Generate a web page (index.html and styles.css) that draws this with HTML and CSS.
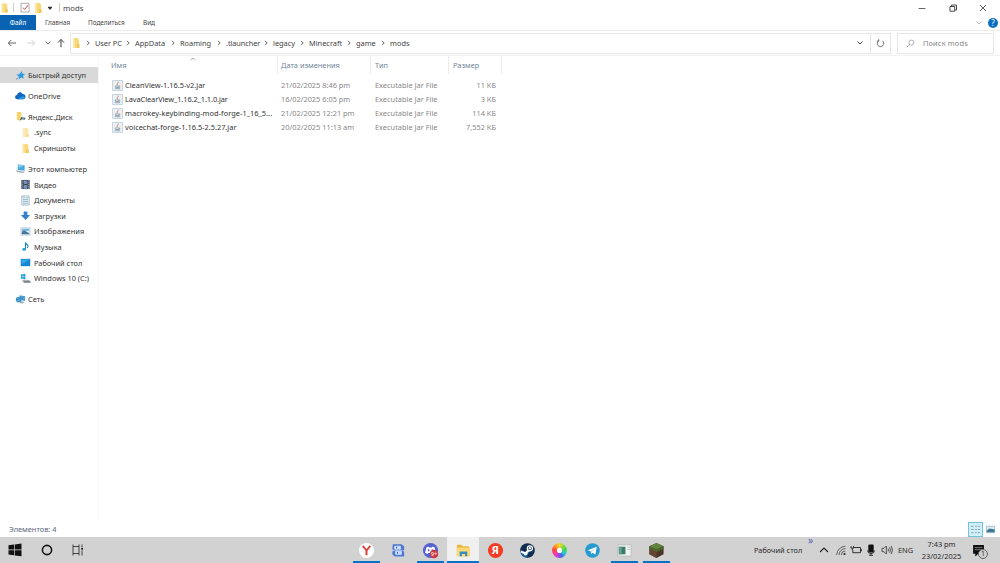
FILE: index.html
```html
<!DOCTYPE html>
<html lang="ru">
<head>
    <meta charset="UTF-8">
    <meta name="viewport" content="width=device-width, initial-scale=1.0">
    <title>mods</title>
    <link rel="stylesheet" href="styles.css">
</head>
<body>
    <svg class="sprite">
        <symbol id="folder" viewBox="0 0 12 12"><path d="M3 1h4.5l1.5 1.5V11H3z" fill="#f8d775"/><path d="M3 1h2v10H3z" fill="#fbe6a2"/><path d="M7 7h2.5v4H7z" fill="#efc658"/></symbol>
        <symbol id="chev" viewBox="0 0 6 8"><path d="M2 1.8L4.2 4 2 6.2" fill="none" stroke="#555" stroke-width=".9"/></symbol>
        <symbol id="down" viewBox="0 0 8 6"><path d="M1.5 1.5L4 4l2.5-2.5" fill="none" stroke="currentColor"/></symbol>
        <symbol id="jar" viewBox="0 0 12 12"><rect x=".7" y=".7" width="10.6" height="10.6" fill="#eef1f4" stroke="#b5c6d4" stroke-width=".8"/><path d="M6.5 1.8c1.5 1.3-2.4 2-.6 3.8" fill="none" stroke="#c97c66" stroke-width="1"/><path d="M3.5 6.5h4.3v1.7H4zM3 9.5h6M8 6.6q1.6.2 0 1.6" fill="none" stroke="#8496a8" stroke-width=".9"/></symbol>
    </svg>

    <div class="window">
        <div class="titlebar">
            <svg class="ico12 first"><use href="#folder"/></svg>
            <span class="divider d1"></span>
            <svg class="check" viewBox="0 0 10 10"><path d="M1 .8h8v8.7H1z" fill="#fff" stroke="#999" stroke-width=".8"/><path d="M3 5.2l1.7 1.7L8 2.7" fill="none" stroke="#b35242"/></svg>
            <svg class="ico12 second"><use href="#folder"/></svg>
            <svg class="caret" viewBox="0 0 6 6"><path d="M1 1.7h4v.8L3 5 1 2.5z" fill="#333"/></svg>
            <span class="divider d2"></span>
            <span class="title">mods</span>
            <div class="controls">
                <svg viewBox="0 0 10 10"><path d="M1.5 5.5h7" stroke="#555" stroke-width=".9"/></svg>
                <svg viewBox="0 0 10 10"><path d="M2 3.5h4.7v4.7H2zM3.5 3.3V2h5v5H7" fill="none" stroke="#333" stroke-width=".9"/></svg>
                <svg viewBox="0 0 10 10"><path d="M2 2l6 6M8 2L2 8" stroke="#333" stroke-width=".8"/></svg>
            </div>
        </div>

        <div class="tabs">
            <span class="tab active">Файл</span>
            <span class="tab t-home">Главная</span>
            <span class="tab t-share">Поделиться</span>
            <span class="tab t-view">Вид</span>
            <svg class="ribbon-toggle" viewBox="0 0 8 6"><use href="#down"/></svg>
            <span class="help">?</span>
        </div>

        <div class="addressbar">
            <div class="nav">
                <svg viewBox="0 0 10 10"><path d="M9 5H1.5M4.3 2L1.3 5l3 3" fill="none" stroke="#555" stroke-width=".9"/></svg>
                <svg viewBox="0 0 10 10"><path d="M1 5h7.5M5.7 2l3 3-3 3" fill="none" stroke="#ccc" stroke-width=".9"/></svg>
                <svg class="small" viewBox="0 0 8 6"><use href="#down"/></svg>
                <svg viewBox="0 0 10 10"><path d="M5 9.3V1.5M2 4.6l3-3.2 3 3.2" fill="none" stroke="#444"/></svg>
            </div>
            <div class="path">
                <svg class="ico12"><use href="#folder"/></svg>
                <svg class="sep"><use href="#chev"/></svg><span class="p-user">User PC</span>
                <svg class="sep"><use href="#chev"/></svg><span class="p-app">AppData</span>
                <svg class="sep"><use href="#chev"/></svg><span class="p-roam">Roaming</span>
                <svg class="sep"><use href="#chev"/></svg><span class="p-tl">.tlauncher</span>
                <svg class="sep"><use href="#chev"/></svg><span class="p-leg">legacy</span>
                <svg class="sep"><use href="#chev"/></svg><span class="p-mc">Minecraft</span>
                <svg class="sep"><use href="#chev"/></svg><span class="p-game">game</span>
                <svg class="sep"><use href="#chev"/></svg><span class="p-mods">mods</span>
                <svg class="history" viewBox="0 0 8 6"><use href="#down"/></svg>
                <div class="refresh"><svg viewBox="0 0 10 10"><path d="M7.2 2A3.6 3.6 0 1 1 3 1.9M3 .2V2.3H1" fill="none" stroke="#555" stroke-width=".9"/></svg></div>
            </div>
            <div class="search">
                <svg viewBox="0 0 10 10"><circle cx="6" cy="4" r="2.8" fill="none" stroke="#888" stroke-width=".7"/><path d="M4 6L1 9" stroke="#888" stroke-width=".8"/></svg>
                <span>Поиск mods</span>
            </div>
        </div>

        <div class="main">
            <div class="sidebar">
                <div class="item selected"><svg viewBox="0 0 12 12"><path d="M7.2 1l1 3 3 .4-2.4 2 .7 3.2-2.8-1.5L4 10.3l.5-3L1.5 5l3.3-.5z" fill="#2f9be0"/><path d="M1 10.5l3-2.6" stroke="#5b91b5"/></svg><span>Быстрый доступ</span></div>
                <div class="item group"><svg viewBox="0 0 12 12"><path d="M2.5 10a2.3 2.3 0 0 1-.3-4.6C3 1.8 7 1.4 8.2 4.4c2.3-.2 3.4 1.5 3.2 3.2-.2 1.6-1.3 2.4-2.4 2.4z" fill="#0f68bd"/><path d="M3 10l5.4-3.5 3 1.7c-.4 1.2-1.2 1.8-2.4 1.8z" fill="#2996df"/></svg><span>OneDrive</span></div>
                <div class="item group"><svg viewBox="0 0 12 12"><path d="M2 1h4l1 1.3V10H2z" fill="#f7d26c"/><path d="M5 10.5l2-4 4.5 1-1 2-3-.4z" fill="#35566c"/><path d="M8 6.2l3 1-1 1.4-2.6-.4z" fill="#8dacb8"/></svg><span>Яндекс.Диск</span></div>
                <div class="item sub faded"><svg><use href="#folder"/></svg><span>.sync</span></div>
                <div class="item sub"><svg><use href="#folder"/></svg><span class="w-shots">Скриншоты</span></div>
                <div class="item group"><svg viewBox="0 0 12 12"><path d="M3 1.5l7.5 1v6L3 7.5z" fill="#48a7df"/><path d="M3 1.5l7.5 1-6 3z" fill="#82cbed"/><path d="M1 8l7 1.2 3 .3-2 1.5-6.8-1.3z" fill="#9daab2"/></svg><span class="w-pc">Этот компьютер</span></div>
                <div class="item sub"><svg viewBox="0 0 12 12"><path d="M1.5 1h9v10h-9z" fill="#3c4654"/><path d="M4 1.5h4v4H4zM4 6.5h4v4H4z" fill="#7591ba"/><path d="M2.7 1.5v9M9.3 1.5v9" stroke="#c1c7cd" stroke-dasharray="1 1" stroke-width=".8"/></svg><span>Видео</span></div>
                <div class="item sub"><svg viewBox="0 0 12 12"><path d="M2 1h8v10H2z" fill="#eef4f7" stroke="#8da7b6" stroke-width=".8"/><path d="M3.2 3h2.2M3.2 5h5.6M3.2 7h5.6M3.2 9h5.6M6.5 3h2.3" stroke="#74a6bd" stroke-width=".8"/></svg><span>Документы</span></div>
                <div class="item sub"><svg viewBox="0 0 12 12"><path d="M4 1.5h4v4h3L6 11 1 5.5h3z" fill="#3284cf"/></svg><span>Загрузки</span></div>
                <div class="item sub"><svg viewBox="0 0 12 12"><path d="M1 2h10v8H1z" fill="#e8f2f7" stroke="#a4b2bb" stroke-width=".6"/><path d="M2 3h8v2.3H2z" fill="#6db7e0"/><path d="M2 6l3-1 5 3v1H2z" fill="#477796"/></svg><span class="w-pics">Изображения</span></div>
                <div class="item sub"><svg viewBox="0 0 12 12"><path d="M6 9V1.5q.3 2 2.5 3 .8 1.3-.6 3" fill="none" stroke="#1884c7" stroke-width="1.2"/><ellipse cx="4.5" cy="9.2" rx="2" ry="1.5" fill="#24a2d9"/></svg><span>Музыка</span></div>
                <div class="item sub"><svg viewBox="0 0 12 12"><path d="M.8 2h10.4v8H.8z" fill="#1686d3"/><path d="M1.5 2.6h9L2 8z" fill="#35a7e9"/></svg><span>Рабочий стол</span></div>
                <div class="item sub"><svg viewBox="0 0 12 12"><path d="M1 1.5l2-.3v2.5H1zM3.5 1.2l2.3-.4v2.9H3.5zM1 4.2h2v2.3l-2-.3zM3.5 4.2h2.3V7l-2.3-.4z" fill="#1c9ed5"/><path d="M2 8l8-.4 1.5 1.7v1.5H4.5z" fill="#a0a9af"/><path d="M4 9.5l7 .2" stroke="#596873" stroke-width=".8"/></svg><span>Windows 10 (C:)</span></div>
                <div class="item group"><svg viewBox="0 0 12 12"><path d="M5 1.3l6 1.2v5.2L5 6.5z" fill="#499dd2"/><circle cx="4" cy="6" r="3.1" fill="#3687c0"/><path d="M2 4.8q2 .2 3-1.5M1.5 7.5q3 0 4.7-2" stroke="#85d1e8" fill="none" stroke-width=".8"/><path d="M6 8l4.5.8L8 10.3 5 9.7z" fill="#8faabc"/></svg><span>Сеть</span></div>
            </div>

            <div class="files">
                <svg class="sort" viewBox="0 0 8 6"><path d="M1.5 4L4 2l2.5 2" fill="none" stroke="#888" stroke-width=".7"/></svg>
                <div class="row head">
                    <span class="name">Имя</span><span class="date">Дата изменения</span><span class="type">Тип</span><span class="size">Размер</span>
                </div>
                <div class="row">
                    <span class="name"><svg><use href="#jar"/></svg><b>CleanView-1.16.5-v2.jar</b></span><span class="date">21/02/2025 8:46 pm</span><span class="type">Executable Jar File</span><span class="size">11 КБ</span>
                </div>
                <div class="row">
                    <span class="name"><svg><use href="#jar"/></svg><b class="tight">LavaClearView_1.16.2_1.1.0.jar</b></span><span class="date">16/02/2025 6:05 pm</span><span class="type">Executable Jar File</span><span class="size">3 КБ</span>
                </div>
                <div class="row">
                    <span class="name"><svg><use href="#jar"/></svg><b class="loose">macrokey-keybinding-mod-forge-1_16_5...</b></span><span class="date">21/02/2025 12:21 pm</span><span class="type">Executable Jar File</span><span class="size">114 КБ</span>
                </div>
                <div class="row">
                    <span class="name"><svg><use href="#jar"/></svg><b>voicechat-forge-1.16.5-2.5.27.jar</b></span><span class="date">20/02/2025 11:13 am</span><span class="type">Executable Jar File</span><span class="size">7,552 КБ</span>
                </div>
            </div>
        </div>

        <div class="status">
            <span>Элементов: 4</span>
            <div class="views">
                <div class="view on"><svg viewBox="0 0 12 12"><path d="M1 2.5h3M1 6h3M1 9.5h3M5.5 2.5h2M8.5 2.5H11M5.5 6h2M8.5 6H11M5.5 9.5h2M8.5 9.5H11" stroke="#6e99a8" stroke-width=".9"/></svg></div>
                <div class="view"><svg viewBox="0 0 12 12"><path d="M1.5 2.5h9v7h-9z" fill="#dceaf3" stroke="#8ea5b5" stroke-width=".7"/><path d="M2 7l3-2 5.5 1v3H2z" fill="#397796"/></svg></div>
            </div>
        </div>
    </div>

    <div class="taskbar">
        <div class="start">
            <svg viewBox="0 0 14 14"><path d="M.5 2.3L6 1.5v5H.5zM6.7 1.4L13.5.5v6H6.7zM.5 7.3H6v5l-5.5-.7zM6.7 7.3h6.8v6l-6.8-.9z" fill="#111"/></svg>
            <svg viewBox="0 0 14 14"><circle cx="7" cy="7" r="4.6" fill="none" stroke="#151515" stroke-width="1.6"/></svg>
            <svg viewBox="0 0 14 14"><path d="M2 1.5v2h6v-2M2 12.5v-2h6v2M2 3.5v7M8 3.5v7M11 1.5v3M11 7.5v5" fill="none" stroke="#333" stroke-width=".9"/><path d="M10.2 5h1.8v1.8h-1.8z" fill="#222"/></svg>
        </div>
        <div class="apps">
            <div class="app open"><svg viewBox="0 0 18 18"><circle cx="9" cy="9" r="8" fill="#fff"/><path d="M5 4l4 5 4-5M9 8.5V14" fill="none" stroke="#d8453c" stroke-width="2.1"/></svg></div>
            <div class="app"><svg viewBox="0 0 18 18"><path d="M3 2.5h9l3 2v4l-1.5.8 1.5 1v5H5l-2.5-2v-3L4 9 2.5 7.5z" fill="#4d78d4"/><path d="M5 4.5h6v3H5zM6 10h6v3H6zM4 8.7h9" fill="#c9dcff" stroke="#e5edff" stroke-width=".8"/><path d="M7 5v2M8 10.5v2" stroke="#315bbb"/></svg></div>
            <div class="app open"><svg viewBox="0 0 18 18"><circle cx="9" cy="9" r="8" fill="#5560d2"/><path d="M4.6 5.8l2.2-1 .6 1h3.2l.6-1 2.2 1 1.3 5.5-2.4 1.5-.9-1.2H6.6l-.9 1.2-2.4-1.5z" fill="#fff"/><ellipse cx="7" cy="8.8" rx="1" ry="1.2" fill="#5560d2"/><ellipse cx="11" cy="8.8" rx="1" ry="1.2" fill="#5560d2"/><circle cx="12.7" cy="12.7" r="4.5" fill="#ce3945"/></svg><span class="badge">9+</span></div>
            <div class="app open current"><svg viewBox="0 0 18 18"><path d="M2 3h5l1.2 1.5H15V15H2z" fill="#e7b842"/><path d="M2 6h14v9H2z" fill="#fbda76"/><path d="M5 10h8v5.2h-2.3v-2.4H7.3v2.4H5z" fill="#388dc2"/></svg></div>
            <div class="app"><svg viewBox="0 0 18 18"><circle cx="9" cy="9" r="8" fill="#f43c24"/></svg><span class="ya">Я</span></div>
            <div class="app"><svg viewBox="0 0 18 18"><circle cx="9" cy="9" r="7.7" fill="#102c50"/><path d="M1.4 9.7L7 12M1.7 11.4a7.7 7.7 0 0 0 6 5.2L12 9" fill="#1765a0"/><path d="M2 10l5 2.1 4-4.5" fill="none" stroke="#fff" stroke-width="2.3"/><circle cx="11.5" cy="6.7" r="2.7" fill="#102c50" stroke="#fff" stroke-width="1.3"/><circle cx="11.5" cy="6.7" r="1.3" fill="#fff"/><circle cx="7" cy="12.3" r="2" fill="#fff"/></svg></div>
            <div class="app"><span class="wheel"></span></div>
            <div class="app"><svg viewBox="0 0 18 18"><circle cx="9" cy="9" r="7.7" fill="#269bd0"/><path d="M4 8.8L13.5 5 12 13.5l-3-2.2-1.5 1.5-.4-3z" fill="#fff"/><path d="M7.3 9.7L12 6.5l-3.7 4.2-.7 1.6z" fill="#b9dceb"/></svg></div>
            <div class="app open"><svg viewBox="0 0 18 18"><path d="M2 3h14v12H2z" fill="#f3f3f0" stroke="#aeb8b5" stroke-width=".8"/><path d="M3 5h7v8H3z" fill="#397c6f"/><path d="M3 5h3v8H3z" fill="#659e8c"/><path d="M12 5.5h3M12 8h3" stroke="#bbc0bf"/></svg></div>
            <div class="app open"><svg viewBox="0 0 18 18"><path d="M9 1l7.5 3.5V13L9 17l-7.5-4V4.5z" fill="#4c3528"/><path d="M1.5 4.5L9 8v9l-7.5-4z" fill="#644532"/><path d="M9 1l7.5 3.5L9 8 1.5 4.5z" fill="#62833e"/><path d="M1.5 4.5L9 8v2.5L7.5 9v1L5 8v1.3L1.5 7zM9 8l7.5-3.5V7L14 9V7.8L11.5 10V9L9 10.5z" fill="#466a2d"/></svg></div>
        </div>
        <div class="tray">
            <span class="desk">Рабочий стол</span>
            <span class="more">»</span>
            <svg class="i-up" viewBox="0 0 10 10"><path d="M1 7l4-4 4 4" fill="none" stroke="#222" stroke-width="1.1"/></svg>
            <svg class="i-net" viewBox="0 0 12 12"><path d="M1.7 11A9 9 0 0 1 10.3 2.2M4 11a6.5 6.5 0 0 1 6.4-6.4M6.3 11a4 4 0 0 1 4-4" fill="none" stroke="#555" stroke-width=".9"/><circle cx="9.5" cy="10" r="1.1" fill="#222"/></svg>
            <svg class="i-bat" viewBox="0 0 12 12"><path d="M3 3.5h7.5v5.2H2.8V6M11.3 5v2.3M1 2v2.2h2.5V2M2.3 4.3V6" fill="none" stroke="#222" stroke-width=".9"/></svg>
            <svg class="i-mic" viewBox="0 0 12 12"><rect x="3.3" y=".6" width="5.4" height="8" rx="1.2" fill="#111"/><path d="M2.5 6.5q0 3 3.5 3t3.5-3M6 9v2.5M4 11.3h4" fill="none" stroke="#222" stroke-width=".9"/></svg>
            <svg class="i-vol" viewBox="0 0 12 12"><path d="M1 4.3h2L5.3 2v8L3 7.7H1zM7 4.5q1 1.5 0 3M8.6 3.2q1.8 2.8 0 5.6M10.2 2q2.6 4 0 8" fill="none" stroke="#333" stroke-width=".8"/></svg>
            <span class="lang">ENG</span>
            <div class="clock"><span>7:43 pm</span><span>23/02/2025</span></div>
            <div class="notes"><svg viewBox="0 0 12 12"><path d="M1 1h10v8H6l-3 2.5V9H1z" fill="#111"/><path d="M2.5 3.3h7M2.5 5.2h7" stroke="#aaa" stroke-width=".6"/></svg><span>1</span></div>
        </div>
    </div>
</body>
</html>
```
FILE: styles.css
```css
* {
    box-sizing: border-box;
}
body {
    margin: 0;
    width: 1000px;
    height: 563px;
    overflow: hidden;
    display: flex;
    flex-direction: column;
    background: #fff;
    color: #444;
    font-family: "Noto Sans", "Open Sans", sans-serif;
    font-size: 7.4px;
    line-height: 10px;
    white-space: nowrap;
}
svg {
    display: block;
    flex: none;
}
.sprite {
    position: absolute;
    width: 0;
    height: 0;
}
.window {
    height: 537px;
    display: flex;
    flex-direction: column;
}
.ico12 {
    width: 12px;
    height: 12px;
}

/* title bar */
.titlebar {
    height: 15px;
    display: flex;
    align-items: center;
}
.first {
    margin-left: -1px;
    width: 11px;
}
.divider {
    width: 1px;
    height: 9px;
    background: #ccc;
}
.d1 {
    margin: 0 6px 0 3px;
}
.check {
    width: 10px;
    height: 11px;
}
.second {
    margin-left: 2px;
}
.caret {
    width: 6px;
    height: 6px;
    margin-left: 3px;
}
.d2 {
    margin: 0 3px 0 6px;
}
.title {
    font-size: 7.8px;
}
.controls {
    margin-left: auto;
    display: flex;
    gap: 20.5px;
    padding-right: 12px;
}
.controls svg {
    width: 10px;
    height: 10px;
}

/* ribbon tabs */
.tabs {
    height: 16px;
    display: flex;
    align-items: center;
    border-bottom: 1px solid #ececec;
    font-size: 6.4px;
}
.active {
    width: 36px;
    height: 15px;
    line-height: 15px;
    text-align: center;
    background: #0963b2;
    color: #fff;
}
.t-home {
    width: 43px;
    margin-left: 9px;
}
.t-share {
    width: 55px;
}
.ribbon-toggle {
    width: 8px;
    height: 6px;
    margin-left: auto;
    color: #bbb;
}
.help {
    width: 10px;
    height: 10px;
    margin: 0 2px 0 5px;
    border-radius: 50%;
    background: #0b6dc0;
    color: #fff;
    font-size: 8px;
    text-align: center;
}

/* address bar */
.addressbar {
    height: 25px;
    display: flex;
    align-items: center;
    border-bottom: 1px solid #f1f1f1;
}
.nav {
    width: 70px;
    display: flex;
    align-items: center;
    gap: 9px;
    padding-left: 7px;
    color: #777;
}
.nav svg {
    width: 10px;
    height: 10px;
}
.nav .small {
    width: 8px;
    height: 6px;
    margin: 0 -5px 0 -1px;
}
.path {
    width: 821px;
    height: 21px;
    display: flex;
    align-items: center;
    border: 1px solid #e6e6e6;
}
.sep {
    width: 6px;
    height: 8px;
    margin: 0 4px 0 3px;
}
.path .ico12 {
    margin-left: -1px;
}
.p-user { width: 27px; }
.p-app { width: 32px; }
.p-roam { width: 33px; }
.p-tl { width: 34px; }
.p-leg { width: 23px; }
.p-mc { width: 34px; }
.p-game { width: 21px; }
.p-user {
    letter-spacing: -.05px;
}
.p-tl {
    letter-spacing: -.1px;
}
.history {
    width: 8px;
    height: 6px;
    margin-left: auto;
}
.refresh {
    width: 20px;
    height: 19px;
    margin-left: 6px;
    display: flex;
    align-items: center;
    justify-content: center;
    border-left: 1px solid #e6e6e6;
}
.refresh svg {
    width: 9px;
    height: 9px;
}
.search {
    width: 97px;
    height: 21px;
    margin-left: 6px;
    display: flex;
    align-items: center;
    gap: 8px;
    padding-left: 8px;
    border: 1px solid #e6e6e6;
    color: #888;
    letter-spacing: .15px;
}
.search svg {
    width: 9px;
    height: 9px;
}

/* folder tree and file list */
.main {
    flex: 1;
    display: flex;
}
.sidebar {
    width: 99px;
    padding-top: 11.3px;
    border-right: 1px solid #f7f7f7;
}
.item {
    width: 98px;
    height: 15.6px;
    display: flex;
    align-items: center;
    gap: 2px;
    padding-left: 15px;
    color: #333;
}
.item svg {
    width: 11px;
    height: 11px;
}
.group {
    margin-top: 5.3px;
}
.sub {
    padding-left: 20px;
    gap: 3px;
}
.w-pc,
.w-pics {
    letter-spacing: .08px;
}
.w-shots {
    letter-spacing: -.08px;
}
.selected {
    background: #d9d9d9;
}
.faded svg {
    opacity: .6;
}
.files {
    position: relative;
    width: 403px;
}
.sort {
    position: absolute;
    left: 90px;
    top: 0;
    width: 8px;
    height: 6px;
}
.row {
    height: 14px;
    display: grid;
    grid-template-columns: 179px 93px 78px 53px;
    align-items: center;
    color: #888;
}
.head {
    height: 18px;
    margin-bottom: 4px;
    color: #71859a;
}
.head span {
    height: 18px;
    line-height: 19px;
    border-right: 1px solid #ececec;
}
.name {
    display: flex;
    align-items: center;
    gap: 2px;
    padding-left: 13px;
}
.name svg {
    width: 11px;
    height: 11px;
}
.name b {
    font-weight: normal;
    color: #333;
}
.head .name {
    align-items: flex-start;
    padding-left: 12px;
}
.name .tight {
    letter-spacing: -.08px;
}
.name .loose {
    letter-spacing: .04px;
}
.date {
    padding-left: 3px;
}
.type {
    padding-left: 4px;
}
.size {
    padding-right: 6px;
    text-align: right;
}
.head .size {
    padding-left: 4px;
    text-align: left;
}

/* status line */
.status {
    height: 16px;
    display: flex;
    align-items: center;
    justify-content: space-between;
    padding: 0 3px 0 9px;
    color: #5a687a;
}
.views {
    display: flex;
}
.view {
    width: 14px;
    height: 15px;
    display: flex;
    align-items: center;
    justify-content: center;
}
.view svg {
    width: 11px;
    height: 11px;
}
.view.on {
    width: 15px;
    border: 1px solid #6fc3db;
    background: #d2effa;
}

/* taskbar */
.taskbar {
    height: 26px;
    display: flex;
    background: #d2d2d2;
    color: #2a2a2a;
}
.start {
    width: 350px;
    display: flex;
    align-items: center;
    gap: 17.5px;
    padding-left: 8px;
}
.start svg {
    width: 14px;
    height: 14px;
}
.apps {
    display: flex;
}
.app {
    position: relative;
    width: 32.3px;
    display: flex;
    align-items: center;
    justify-content: center;
}
.app svg {
    width: 17px;
    height: 17px;
}
.open {
    background: linear-gradient(#0873c7, #0873c7) center bottom / 27px 2px no-repeat;
}
.current {
    background: linear-gradient(#0873c7, #0873c7) center bottom / 32px 2px no-repeat #f0f0f0;
}
.badge {
    position: absolute;
    left: 16.5px;
    top: 11.5px;
    font-size: 5.5px;
    color: #fff;
}
.ya {
    position: absolute;
    left: 0;
    right: 0;
    top: 8px;
    text-align: center;
    font-size: 11px;
    font-weight: bold;
    color: #fff;
}
.wheel {
    width: 15px;
    height: 15px;
    border-radius: 50%;
    background: radial-gradient(#fff 0 2.4px, transparent 3px), conic-gradient(#f3d730, #8fd93f, #43d650, #21cbd6, #4366e8, #c939e1, #ff3f8e, #ff463c, #ff9d28, #f3d730);
}
.tray {
    margin-left: auto;
    width: 246px;
    display: flex;
    align-items: center;
}
.tray svg {
    width: 12px;
    height: 12px;
}
.desk {
    width: 54px;
}
.more {
    width: 10px;
    align-self: flex-start;
    margin-top: -2px;
    font-size: 10px;
    color: #5267b0;
}
.tray .i-up {
    width: 10px;
    height: 10px;
    margin: 0 6px 0 1px;
}
.i-bat {
    margin-left: 3px;
}
.i-mic {
    margin-left: 3px;
}
.i-vol {
    margin-left: 4px;
}
.lang {
    width: 23px;
    margin-left: 5px;
}
.clock {
    width: 41px;
    display: flex;
    flex-direction: column;
    text-align: center;
    line-height: 12px;
}
.notes {
    position: relative;
    margin-left: 10px;
}
.tray .notes svg {
    width: 13px;
    height: 13px;
}
.notes span {
    position: absolute;
    left: 6px;
    top: 5px;
    width: 10px;
    height: 10px;
    border: 1px solid #666;
    border-radius: 50%;
    background: #d2d2d2;
    font-size: 7px;
    line-height: 8px;
    text-align: center;
}
```
